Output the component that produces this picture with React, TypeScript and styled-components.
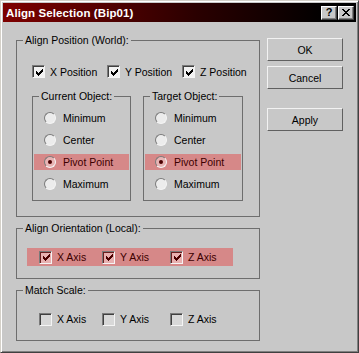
import React from "react";
import styled, { createGlobalStyle } from "styled-components";

const GlobalStyle = createGlobalStyle`
  body {
    margin: 0;
    background: #c8c8c8;
    font-family: "Liberation Sans", Arial, sans-serif;
    font-size: 10.5px;
    color: #000;
  }
`;

const StyledWindow = styled("div")`
  width: 359px;
  height: 353px;
  box-sizing: border-box;
  background: #c8c8c8;
  border: 1px solid;
  border-color: #d4d0c8 #404040 #404040 #d4d0c8;
  box-shadow: inset 1px 1px #ffffff, inset -1px -1px #808080;
  padding: 2px;
`;

const StyledTitleBar = styled("div")`
  height: 19px;
  display: flex;
  align-items: center;
  padding: 0 2px 0 3px;
  background: linear-gradient(to right, #7e0000, #2a0000 55%, #000000 92%);
`;

const StyledTitle = styled("div")`
  color: #ffffff;
  font-weight: 700;
  font-size: 11.5px;
  letter-spacing: 0.1px;
`;

const StyledTitleButtons = styled("div")`
  margin-left: auto;
  display: flex;
  gap: 1px;
`;

const StyledTitleButton = styled("div")`
  width: 16px;
  height: 14px;
  box-sizing: border-box;
  background: #c8c8c8;
  border: 1px solid;
  border-color: #ffffff #404040 #404040 #ffffff;
  box-shadow: inset -1px -1px #808080;
  display: flex;
  align-items: center;
  justify-content: center;
  font-weight: 700;
  font-size: 11px;
  line-height: 1;
`;

const StyledBody = styled("div")`
  display: flex;
  gap: 7px;
  padding: 12px 0 0 13px;
`;

const StyledLeft = styled("div")`
  display: flex;
  flex-direction: column;
  gap: 5px;
`;

const StyledGroup = styled("fieldset")<{ $w: number }>`
  margin: 0;
  min-width: 0;
  width: ${(p) => p.$w}px;
  box-sizing: border-box;
  padding: 0;
  border: 1px solid #6e6e6e;
`;

const StyledGroupBody = styled("div")<{ $pad: string }>`
  padding: ${(p) => p.$pad};
`;

const StyledLegend = styled("legend")`
  margin-left: 6px;
  padding: 0 2px;
  font-size: 10.5px;
  line-height: 12px;
`;

const StyledPosRow = styled("div")`
  display: grid;
  grid-template-columns: 75px 75px auto;
  align-items: center;
`;

const StyledItem = styled("label")<{ $gap: number }>`
  display: flex;
  align-items: center;
  gap: ${(p) => p.$gap}px;
  white-space: nowrap;
`;

const StyledSubRow = styled("div")`
  display: flex;
  gap: 12px;
  margin-top: 12px;
`;

const StyledRadioList = styled("div")`
  display: flex;
  flex-direction: column;
  gap: 6px;
`;

const StyledRadioRow = styled("div")<{ $hot: boolean }>`
  height: 16px;
  display: flex;
  align-items: center;
  gap: 7px;
  padding-left: 10px;
  background: ${(p) => (p.$hot ? "#d68888" : "transparent")};
  color: ${(p) => (p.$hot ? "#3c0000" : "#000")};
`;

const StyledRadio = styled("span")<{ $hot: boolean }>`
  width: 12px;
  height: 12px;
  box-sizing: border-box;
  border-radius: 50%;
  background: ${(p) => (p.$hot ? "#e8b4b4" : "#ececec")};
  border: 1px solid;
  border-color: #7a7a7a #f4f4f4 #f4f4f4 #7a7a7a;
  display: flex;
  align-items: center;
  justify-content: center;
  flex: none;
`;

const StyledDot = styled("span")`
  width: 4px;
  height: 4px;
  border-radius: 50%;
  background: #4a0000;
`;

const StyledAxisRow = styled("div")<{ $hot: boolean }>`
  width: 206px;
  height: 18px;
  box-sizing: border-box;
  padding-left: 12px;
  display: grid;
  grid-template-columns: 63px 68px auto;
  align-items: center;
  background: ${(p) => (p.$hot ? "#d68888" : "transparent")};
  color: ${(p) => (p.$hot ? "#3c0000" : "#000")};
`;

const StyledBox = styled("span")<{ $hot: boolean; $on: boolean }>`
  width: 13px;
  height: 13px;
  box-sizing: border-box;
  flex: none;
  border: 1px solid;
  border-color: #7a7a7a #f4f4f4 #f4f4f4 #7a7a7a;
  box-shadow: inset 1px 1px ${(p) => (p.$hot ? "#6a2020" : "#404040")};
  background: ${(p) =>
    p.$hot ? "#e8b0b0" : p.$on ? "#f2f2f2" : "#d8d8d8"};
  display: flex;
  align-items: center;
  justify-content: center;
  padding: 1px 0 0 1px;
  color: ${(p) => (p.$hot ? "#4a0000" : "#000")};
`;

const StyledButtons = styled("div")`
  display: flex;
  flex-direction: column;
  gap: 5px;
  margin-top: 4px;
  width: 76px;
`;

const StyledButton = styled("button")<{ $gapTop?: number }>`
  height: 23px;
  margin-top: ${(p) => p.$gapTop ?? 0}px;
  padding: 0;
  font-family: inherit;
  font-size: 10.5px;
  color: #000;
  background: #c8c8c8;
  border: 1px solid;
  border-color: #f2f2f2 #606060 #606060 #f2f2f2;
`;

const Check = ({ on, hot }: { on: boolean; hot: boolean }) => (
  <StyledBox $on={on} $hot={hot}>
    {on && (
      <svg width="7" height="7" viewBox="0 0 7 7" shapeRendering="crispEdges">
        <path
          d="M6 0h1v3h-1v1h-1v1h-1v1h-1v1h-1v-1h-1v-1h-1v-3h1v1h1v1h1v-1h1v-1h1z"
          fill="currentColor"
        />
      </svg>
    )}
  </StyledBox>
);

const radios = ["Minimum", "Center", "Pivot Point", "Maximum"];

const RadioGroup = ({ title, w }: { title: string; w: number }) => (
  <StyledGroup $w={w}>
    <StyledLegend>{title}</StyledLegend>
    <StyledGroupBody $pad="8px 1px 8px 1px">
      <StyledRadioList>
        {radios.map((r) => {
          const hot = r === "Pivot Point";
          return (
            <StyledRadioRow key={r} $hot={hot}>
              <StyledRadio $hot={hot}>{hot && <StyledDot />}</StyledRadio>
              {r}
            </StyledRadioRow>
          );
        })}
      </StyledRadioList>
    </StyledGroupBody>
  </StyledGroup>
);

const axes = ["X Axis", "Y Axis", "Z Axis"];

const AxisGroup = ({ title, on }: { title: string; on: boolean }) => (
  <StyledGroup $w={244}>
    <StyledLegend>{title}</StyledLegend>
    <StyledGroupBody $pad="14px 0 12px 10px">
      <StyledAxisRow $hot={on}>
        {axes.map((a) => (
          <StyledItem key={a} $gap={5}>
            <Check on={on} hot={on} />
            {a}
          </StyledItem>
        ))}
      </StyledAxisRow>
    </StyledGroupBody>
  </StyledGroup>
);

const App: React.FC = () => {
  return (
    <StyledWindow>
      <GlobalStyle />
      <StyledTitleBar>
        <StyledTitle>Align Selection (Bip01)</StyledTitle>
        <StyledTitleButtons>
          <StyledTitleButton>?</StyledTitleButton>
          <StyledTitleButton>
            <svg width="8" height="7" viewBox="0 0 8 7" shapeRendering="crispEdges">
              <path
                d="M0 0h2v1h1v1h2v-1h1v-1h2v1h-1v1h-1v1h-1v1h1v1h1v1h1v1h-2v-1h-1v-1h-2v1h-1v1h-2v-1h1v-1h1v-1h1v-1h-1v-1h-1v-1h-1z"
                fill="#000"
              />
            </svg>
          </StyledTitleButton>
        </StyledTitleButtons>
      </StyledTitleBar>
      <StyledBody>
        <StyledLeft>
          <StyledGroup $w={244}>
            <StyledLegend>Align Position (World):</StyledLegend>
            <StyledGroupBody $pad="19px 16px 15px 15px">
              <StyledPosRow>
                {["X Position", "Y Position", "Z Position"].map((p) => (
                  <StyledItem key={p} $gap={5}>
                    <Check on hot={false} />
                    {p}
                  </StyledItem>
                ))}
              </StyledPosRow>
              <StyledSubRow>
                <RadioGroup title="Current Object:" w={99} />
                <RadioGroup title="Target Object:" w={100} />
              </StyledSubRow>
            </StyledGroupBody>
          </StyledGroup>
          <AxisGroup title="Align Orientation (Local):" on />
          <AxisGroup title="Match Scale:" on={false} />
        </StyledLeft>
        <StyledButtons>
          <StyledButton>OK</StyledButton>
          <StyledButton>Cancel</StyledButton>
          <StyledButton $gapTop={14}>Apply</StyledButton>
        </StyledButtons>
      </StyledBody>
    </StyledWindow>
  );
};

export default App;
